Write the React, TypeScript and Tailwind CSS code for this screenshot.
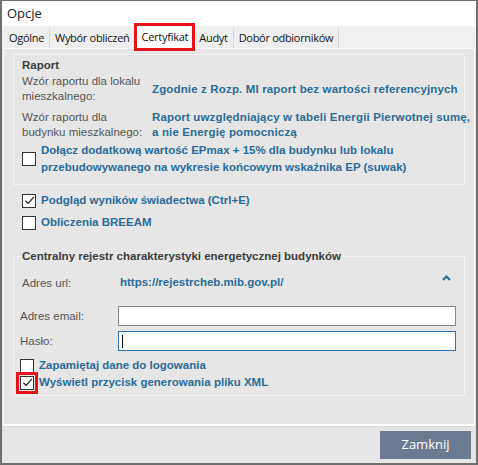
import { useState } from 'react'

const UI_FONT = '"Liberation Sans", Arial, "Noto Sans", sans-serif'
const TAB_FONT = '"Open Sans", "Noto Sans", "Liberation Sans", sans-serif'

const TABS = ['Ogólne', 'Wybór obliczeń', 'Certyfikat', 'Audyt', 'Dobór odbiorników']

function CheckBox({ checked, onToggle }: { checked: boolean; onToggle: () => void }) {
  return (
    <button
      type="button"
      onClick={onToggle}
      className="flex h-[14px] w-[14px] shrink-0 items-center justify-center border border-[#333333] bg-white"
    >
      {checked && (
        <svg className="h-[11px] w-[11px]" viewBox="0 0 12 12" fill="none" stroke="#222" strokeWidth={1.4}>
          <path d="M1.5 6.2 4.6 9.2 10.6 2.4" />
        </svg>
      )}
    </button>
  )
}

function CheckRow({
  label,
  checked,
  onToggle,
  className = '',
}: {
  label: React.ReactNode
  checked: boolean
  onToggle: () => void
  className?: string
}) {
  return (
    <label className={`flex items-center gap-[5px] ${className}`}>
      <CheckBox checked={checked} onToggle={onToggle} />
      <span className="whitespace-nowrap text-[11.5px] font-bold leading-[17px] text-[#2b6b98]">{label}</span>
    </label>
  )
}

export default function App() {
  const [epmax, setEpmax] = useState(false)
  const [preview, setPreview] = useState(true)
  const [breeam, setBreeam] = useState(false)
  const [remember, setRemember] = useState(false)
  const [xml, setXml] = useState(true)
  const [email, setEmail] = useState('')
  const [password, setPassword] = useState('')

  return (
    <div
      className="flex h-[465px] w-[478px] flex-col border-x-2 border-b-2 border-t border-[#6f6f6f] bg-[#e6e6e6]"
      style={{ fontFamily: UI_FONT }}
    >
      <div className="flex h-[25px] items-center bg-white px-[5px]">
        <span className="text-[13px] text-[#222]" style={{ fontFamily: TAB_FONT }}>
          Opcje
        </span>
      </div>

      <div className="flex h-[22px] items-end bg-[#f0f0f0] pl-[2px]" style={{ fontFamily: TAB_FONT }}>
        {TABS.map((tab) =>
          tab === 'Certyfikat' ? (
            <div
              key={tab}
              className="relative z-10 mx-[2px] flex h-[22px] items-center bg-white px-[4px] text-[11px] tracking-[-0.25px] text-[#111] outline outline-[3px] outline-[#e3141c]"
            >
              {tab}
            </div>
          ) : (
            <div
              key={tab}
              className="flex h-[20px] items-center border-r border-[#d4d4d4] bg-[#efefef] px-[5px] text-[11px] tracking-[-0.3px] text-[#111]"
            >
              {tab}
            </div>
          ),
        )}
      </div>

      <div className="mx-[1px] flex h-[378px] flex-col border border-b-[2px] border-[#fafafa] border-b-white bg-[#e6e6e6] px-[9px] pt-[5px]">
        <div className="border border-[#f2f2f2] pb-[8px] pl-[8px] pt-[2px]">
          <div className="text-[11.5px] font-bold leading-[16px] text-[#3c3c3c]">Raport</div>
          <div className="grid grid-cols-[130px_1fr] items-center gap-y-[6px] pt-[1px]">
            <div className="text-[11.5px] leading-[15px] text-[#555]">
              Wzór raportu dla lokalu
              <br />
              mieszkalnego:
            </div>
            <div className="whitespace-nowrap text-[11.5px] font-bold leading-[15px] tracking-[0.15px] text-[#2b6b98]">
              Zgodnie z Rozp. MI raport bez wartości referencyjnych
            </div>
            <div className="text-[11.5px] leading-[15px] text-[#555]">
              Wzór raportu dla
              <br />
              budynku mieszkalnego:
            </div>
            <div className="whitespace-nowrap text-[11.5px] font-bold leading-[15px] tracking-[0.15px] text-[#2b6b98]">
              Raport uwzględniający w tabeli Energii Pierwotnej sumę,
              <br />a nie Energię pomocniczą
            </div>
          </div>
          <CheckRow
            className="mt-[2px]"
            checked={epmax}
            onToggle={() => setEpmax((v) => !v)}
            label={
              <>
                Dołącz dodatkową wartość EPmax + 15% dla budynku lub lokalu
                <br />
                przebudowywanego na wykresie końcowym wskaźnika EP (suwak)
              </>
            }
          />
        </div>

        <div className="flex flex-col gap-[5px] pl-[9px] pt-[7px]">
          <CheckRow label="Podgląd wyników świadectwa (Ctrl+E)" checked={preview} onToggle={() => setPreview((v) => !v)} />
          <CheckRow label="Obliczenia BREEAM" checked={breeam} onToggle={() => setBreeam((v) => !v)} />
        </div>

        <fieldset className="mt-[17px] border border-[#f2f2f2] pb-[4px] pl-[8px] pr-[8px]">
          <legend className="text-[11.5px] font-bold leading-[16px] text-[#3c3c3c]">
            Centralny rejestr charakterystyki energetycznej budynków
          </legend>
          <div className="flex items-center pt-[8px]">
            <span className="w-[98px] pt-[3px] text-[11.5px] text-[#555]">Adres url:</span>
            <span className="flex-1 text-[11.5px] font-bold text-[#2b6b98]">https://rejestrcheb.mib.gov.pl/</span>
            <svg className="mb-[8px] mr-[5px] h-[6px] w-[9px]" viewBox="0 0 9 6" fill="none" stroke="#2b6b98" strokeWidth={2}>
              <path d="M1 5 4.5 1.5 8 5" />
            </svg>
          </div>
          <div className="mt-[14px] flex flex-col gap-[5px]">
            <label className="flex items-center">
              <span className="-ml-[2px] w-[98px] text-[11.5px] text-[#555]">Adres email:</span>
              <input
                value={email}
                onChange={(e) => setEmail(e.target.value)}
                className="h-[20px] flex-1 border border-[#8a8a8a] bg-white px-[3px] text-[11.5px] outline-none"
              />
            </label>
            <label className="flex items-center">
              <span className="-ml-[2px] w-[98px] text-[11.5px] text-[#555]">Hasło:</span>
              <div className="flex h-[20px] flex-1 items-center border border-[#2f72ad] bg-white px-[3px]">
                <span className="h-[13px] w-px bg-black" />
                <input
                  type="password"
                  value={password}
                  onChange={(e) => setPassword(e.target.value)}
                  className="h-full flex-1 bg-transparent text-[11.5px] outline-none"
                />
              </div>
            </label>
          </div>
          <div className="-ml-[2px] mt-[6px] flex flex-col">
            <CheckRow label="Zapamiętaj dane do logowania" checked={remember} onToggle={() => setRemember((v) => !v)} />
            <label className="flex items-center gap-[5px]">
              <span className="outline outline-[3px] outline-offset-[1px] outline-[#e3141c]">
                <CheckBox checked={xml} onToggle={() => setXml((v) => !v)} />
              </span>
              <span className="text-[11.5px] font-bold leading-[17px] text-[#2b6b98]">
                Wyświetl przycisk generowania pliku XML
              </span>
            </label>
          </div>
        </fieldset>
      </div>

      <div className="flex flex-1 items-start justify-end border-t border-[#d9d9d9] pr-[5px] pt-[4px]">
        <button
          type="button"
          className="h-[28px] w-[91px] bg-[#6b7a90] text-[13px] text-white"
          style={{ fontFamily: TAB_FONT }}
        >
          Zamknij
        </button>
      </div>
    </div>
  )
}
